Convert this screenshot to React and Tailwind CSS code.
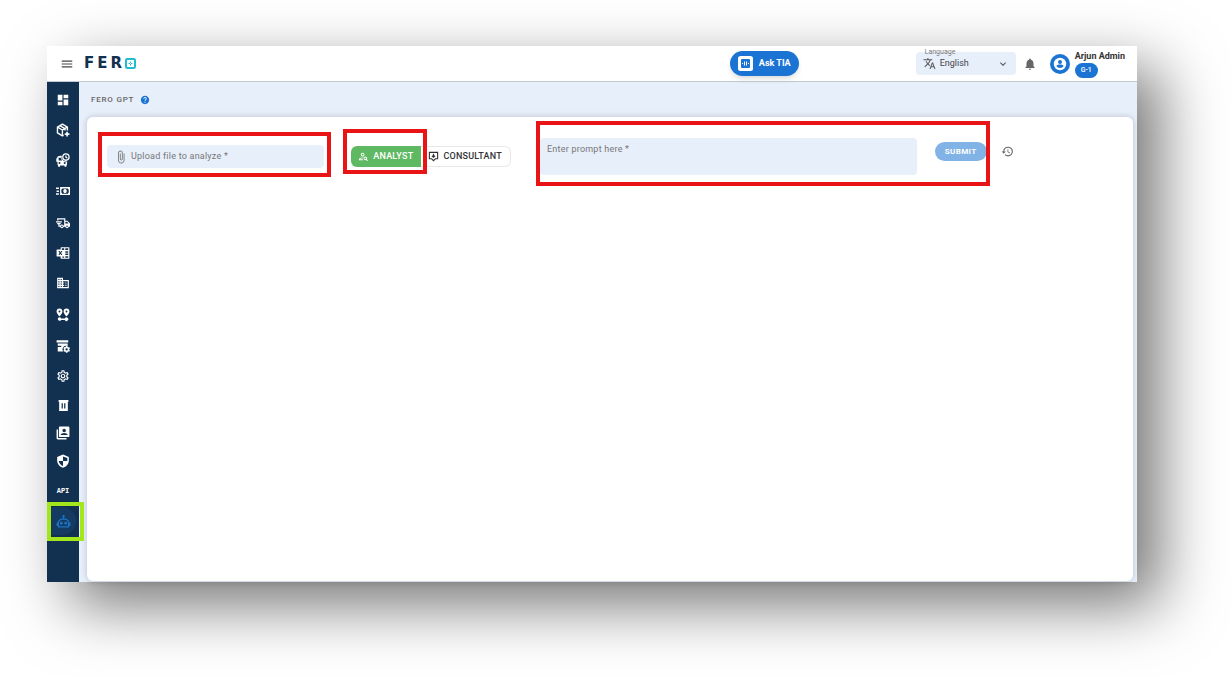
import React from "react";
import {
  MdAttachFile,
  MdDashboard,
  MdDomain,
  MdExpandMore,
  MdHelp,
  MdHistory,
  MdMenu,
  MdNotifications,
  MdOutlinePersonSearch,
  MdOutlineSettings,
  MdTranslate,
} from "react-icons/md";

function Svg({ children, className = "size-[14px]" }) {
  return (
    <svg viewBox="0 0 24 24" fill="currentColor" className={className} aria-hidden="true">
      {children}
    </svg>
  );
}

const PackageAdd = () => (
  <Svg>
    <g fill="none" stroke="currentColor" strokeWidth="2.4" strokeLinejoin="round">
      <path d="M13 21 11 22 2.5 17V7L11 2l8.500 5v6" />
      <path d="M2.500 7 11 12l8.500-5M11 12v10M6.500 4.500l9 5.300v3" />
      <path d="M19 15v8M15 19h8" strokeWidth="2.800" />
    </g>
  </Svg>
);

const BusClock = () => (
  <Svg>
    <path
      fillRule="evenodd"
      d="M3 6C4 4.700 7 4.500 10 4.500A7.500 7.500 0 0 0 17 14.500h2V19c0 1-.4 1.600-1 2v1.500c0 .6-.4 1-1 1h-1.500c-.6 0-1-.4-1-1V21.500H7v1c0 .6-.4 1-1 1H4.500c-.6 0-1-.4-1-1V21c-.6-.4-1-1-1-2v-4H.500V9H2V8c0-.8.300-1.500 1-2Zm1.500 2v5h6A9 9 0 0 1 8.700 8H4.500ZM6 15.500a1.700 1.700 0 1 0 0 3.400 1.700 1.700 0 0 0 0-3.400Zm9 0a1.700 1.700 0 1 0 0 3.400 1.700 1.700 0 0 0 0-3.400Z"
    />
    <path fillRule="evenodd" d="M17 .500a6.500 6.500 0 1 1 0 13 6.500 6.500 0 0 1 0-13Zm0 2.200a4.300 4.300 0 1 0 0 8.600 4.300 4.300 0 0 0 0-8.600Zm-1 1.500h2v2.700l2 1.200-1 1.600-3-1.900V4.200Z" />
  </Svg>
);

const CashFast = () => (
  <Svg>
    <path d="M0 6h5v2.500H0zM1 11h4v2.500H1zM0 16h5v2.500H0z" />
    <path fillRule="evenodd" d="M7 5h17v14H7V5Zm3.500 2.500c0 1-.5 1.700-1.300 2v5c.8.300 1.300 1 1.300 2h10c0-1 .5-1.700 1.300-2v-5c-.8-.3-1.300-1-1.300-2h-10Zm5 1c1.700 0 3 1.500 3 3.500s-1.300 3.500-3 3.500-3-1.500-3-3.500 1.300-3.500 3-3.500Z" />
  </Svg>
);

const TruckFast = () => (
  <Svg>
    <path
      fillRule="evenodd"
      d="M2 4h14v4h3.500L24 13v5.500h-2a3.200 3.200 0 0 1-6.200 0h-2.600a3.200 3.200 0 0 1-6.200 0H4V14h2v2.300h1.300a3.200 3.200 0 0 1 5.600 0H14V6.200H4V7.500H2V4ZM0 9h10v2H0V9Zm2 3h6v2H2v-2Zm14-2v3h5.500L19.200 10H16ZM10.100 16.300a1.400 1.400 0 1 0 0 2.800 1.400 1.400 0 0 0 0-2.800Zm8.800 0a1.400 1.400 0 1 0 0 2.800 1.400 1.400 0 0 0 0-2.800Z"
    />
  </Svg>
);

const Spreadsheet = () => (
  <Svg>
    <path
      fillRule="evenodd"
      d="M9 2h13c.6 0 1 .4 1 1v18c0 .6-.4 1-1 1H9c-.6 0-1-.4-1-1v-3H2c-.6 0-1-.4-1-1V7c0-.6.400-1 1-1h6V3c0-.6.400-1 1-1Zm1 2v3h4V4h-4Zm6 0v3h5V4h-5Zm0 5v2.500h5V9h-5Zm0 4v2.500h5V13h-5Zm0 4.500V20h5v-2.500h-5Zm-5 .5v2h3v-2h-3ZM4 8.500 6.200 12 4 15.500h2.200l1.300-2.200 1.300 2.200H11L8.700 12 11 8.500H8.800l-1.300 2.100-1.300-2.100H4Z"
    />
  </Svg>
);

const RoutePins = () => (
  <Svg>
    <path
      fillRule="evenodd"
      d="M6 1a5 5 0 0 1 5 5C11 9.500 6 14.500 6 14.500S1 9.500 1 6a5 5 0 0 1 5-5Zm0 3.400a1.600 1.600 0 1 0 0 3.200 1.600 1.600 0 0 0 0-3.200ZM18 1a5 5 0 0 1 5 5c0 3.500-5 8.500-5 8.500S13 9.500 13 6a5 5 0 0 1 5-5Zm0 3.400a1.600 1.600 0 1 0 0 3.200 1.600 1.600 0 0 0 0-3.200Z"
    />
    <path d="M6 16a3 3 0 0 1 2.800 2h6.400a3 3 0 1 1 0 2.400H8.800A3 3 0 1 1 6 16Z" />
  </Svg>
);

const ArchiveCog = () => (
  <Svg>
    <path d="M1 2h20v4H1zM3 7.500h17V12a6.500 6.500 0 0 0-8 9.500H3v-8h6v-2H3v-4Z" />
    <path fillRule="evenodd" d="M17 12h2.500l.4 1.500 1.200.7 1.500-.4 1.200 2.100-1 1.200v1.300l1 1.200-1.200 2.100-1.500-.4-1.200.7-.4 1.500H17l-.4-1.500-1.200-.7-1.500.4-1.200-2.100 1-1.200v-1.300l-1-1.200 1.200-2.100 1.500.4 1.200-.7L17 12Zm1.200 3.800a2 2 0 1 0 0 4 2 2 0 0 0 0-4Z" />
  </Svg>
);

const TrashBin = () => (
  <Svg className="size-[13px]">
    <path fillRule="evenodd" d="M3 2h18v3.500h-1V22H4V5.500H3V2Zm5.500 6v9.500h2.300V8H8.500Zm4.700 0v9.500h2.300V8h-2.300Z" />
  </Svg>
);

const ContactBox = () => (
  <Svg>
    <path d="M1 6h2.500v14.500H18V23H3a2 2 0 0 1-2-2V6Z" />
    <path fillRule="evenodd" d="M7 1h14a2 2 0 0 1 2 2v14a2 2 0 0 1-2 2H7a2 2 0 0 1-2-2V3c0-1.100.900-2 2-2Zm7 3.500a3 3 0 1 0 0 6 3 3 0 0 0 0-6ZM8 15.500h12c0-2.400-3.500-3.600-6-3.600s-6 1.200-6 3.600Z" />
  </Svg>
);

const ShieldHalf = () => (
  <Svg>
    <path fillRule="evenodd" d="m12 1 10 4v6c0 6-4.200 10.500-10 12.500C6.200 21.500 2 17 2 11V5l10-4Zm0 3.200V12h7.300c.1-.4.100-.8.100-1.200V6.700L12 4.200ZM12 12H4.700c.7 4 3.500 7 7.300 8.700V12Z" />
  </Svg>
);

const RobotOutline = () => (
  <Svg className="size-[15px]">
    <path
      fillRule="evenodd"
      d="M12 1.500a2 2 0 0 1 1 3.700V7h1c4 0 7 3 7.200 6.500H23V19h-2v2.500H3V19H1v-5.500h1.800C3 10 6 7 10 7h1V5.200a2 2 0 0 1 1-3.700ZM10 9c-3 0-5.200 2.200-5.200 5v5.500h14.400V14c0-2.800-2.200-5-5.200-5h-4Zm-1.500 3.500a2.300 2.300 0 1 1 0 4.600 2.300 2.300 0 0 1 0-4.600Zm7 0a2.300 2.300 0 1 1 0 4.600 2.300 2.300 0 0 1 0-4.600Z"
    />
  </Svg>
);

const ApiWord = () => (
  <span aria-hidden="true" className="font-['Liberation_Mono',monospace] text-[7px] leading-none font-bold">
    API
  </span>
);

const Icon = (Component) => () => <Component className="size-[14px]" />;

const NAV = [
  { label: "Dashboard", icon: Icon(MdDashboard), height: "h-[30px]" },
  { label: "Orders", icon: PackageAdd, height: "h-[30px]" },
  { label: "Schedules", icon: BusClock, height: "h-[30px]" },
  { label: "Payments", icon: CashFast, height: "h-8" },
  { label: "Shipments", icon: TruckFast, height: "h-8" },
  { label: "Reports", icon: Spreadsheet, height: "h-7" },
  { label: "Company", icon: Icon(MdDomain), height: "h-8" },
  { label: "Routes", icon: RoutePins, height: "h-8" },
  { label: "Inventory", icon: ArchiveCog, height: "h-[30px]" },
  { label: "Settings", icon: Icon(MdOutlineSettings), height: "h-[30px]" },
  { label: "Bin", icon: TrashBin, height: "h-7" },
  { label: "Contacts", icon: ContactBox, height: "h-7" },
  { label: "Security", icon: ShieldHalf, height: "h-7" },
  { label: "API", icon: ApiWord, height: "h-8" },
  { label: "FERO GPT", icon: RobotOutline, height: "h-7", active: true },
];

function Highlight({ className }) {
  return <div aria-hidden="true" className={`pointer-events-none absolute z-10 border-4 ${className}`} />;
}

function Logo() {
  return (
    <a href="#home" aria-label="FERO" className="ml-[10px] flex items-center text-[#12304f]">
      <span className="font-['DejaVu_Sans',sans-serif] text-[15px] leading-none font-bold tracking-[3px]">FER</span>
      <svg viewBox="0 0 11 11" className="size-[11px]" fill="none" aria-hidden="true">
        <rect x="1" y="1" width="9" height="9" rx="1.200" stroke="#1fbdd2" strokeWidth="2" />
        <path d="M5.500 3.500v4M3.500 5.500h4" stroke="#1fbdd2" strokeWidth="1" />
        <rect x="5" y="5" width="1" height="1" fill="#fff" />
      </svg>
    </a>
  );
}

function Header() {
  return (
    <header className="flex h-9 items-center border-b border-[#c3c8d2] bg-white pr-3 pl-[13px]">
      <button type="button" aria-label="Open menu" className="text-[#444]">
        <MdMenu className="size-[14px]" />
      </button>
      <Logo />
      <button
        type="button"
        className="mr-[117px] ml-auto flex h-[25px] items-center gap-1.5 rounded-full bg-[#1b74d3] px-2 text-[9px] font-bold text-white shadow-md"
      >
        <svg viewBox="0 0 15 15" className="size-[15px]" aria-hidden="true">
          <rect width="15" height="15" rx="2.500" fill="#fff" />
          <rect x="3" y="3" width="9" height="9" rx="1" fill="#1b74d3" />
          <path d="M4.500 7v1M6.500 5.500v4M8.500 5.500v4M10.500 7v1" stroke="#fff" strokeWidth="1" />
        </svg>
        Ask TIA
      </button>
      <div className="relative flex h-[23px] w-[100px] items-center rounded-sm bg-[#e7effb] text-[#555]">
        <label htmlFor="language" className="absolute -top-1 left-[9px] text-[7px] leading-[8px] text-[#777]">
          Language
        </label>
        <MdTranslate className="pointer-events-none absolute left-[7px] size-[13px]" />
        <select
          id="language"
          defaultValue="English"
          className="h-full w-full appearance-none bg-transparent pl-6 text-[9px] text-[#444] outline-none"
        >
          <option>English</option>
        </select>
        <MdExpandMore className="pointer-events-none absolute right-[7px] size-3" />
      </div>
      <button type="button" aria-label="Notifications" className="ml-[7px] text-[#666]">
        <MdNotifications className="size-[14px]" />
      </button>
      <svg viewBox="0 0 20 20" className="ml-[13px] size-5" aria-hidden="true">
        <circle cx="10" cy="10" r="10" fill="#1b74d3" />
        <circle cx="10" cy="10" r="6.200" fill="#fff" />
        <circle cx="10" cy="8" r="2" fill="#1b74d3" />
        <path d="M6.300 12c.8-1 2.300-1.400 3.700-1.400s2.900.4 3.700 1.400a4.400 4.400 0 0 1-7.400 0Z" fill="#1b74d3" />
      </svg>
      <div className="ml-[5px] flex flex-col items-start gap-px">
        <span className="text-[9px] leading-[12px] font-bold whitespace-nowrap text-[#333]">Arjun Admin</span>
        <span className="rounded-full bg-[#1b74d3] px-1.5 text-[7px] leading-[15px] font-medium text-white">G-1</span>
      </div>
    </header>
  );
}

function Sidebar() {
  return (
    <nav aria-label="Main" className="flex w-8 shrink-0 flex-col bg-[#12304f] pt-[3px] text-white">
      {NAV.map(({ label, icon: Glyph, height, active }) => (
        <a
          key={label}
          href="#section"
          aria-label={label}
          aria-current={active ? "page" : undefined}
          className={`relative flex items-center justify-center ${height} ${active ? "text-[#1b74c8]" : ""}`}
        >
          {active && <span className="absolute inset-y-0 right-[3px] left-1 rounded-r-full bg-[#163b62]" />}
          <span className="relative flex">
            <Glyph />
          </span>
          {active && <Highlight className="-top-[5px] -right-[5px] -bottom-1.5 left-0 border-[#a2e61b]" />}
        </a>
      ))}
    </nav>
  );
}

function UploadField() {
  return (
    <div className="relative w-[21.6%]">
      <label
        htmlFor="upload"
        className="flex h-[23px] items-center gap-[3px] rounded-sm bg-[#e7effb] pl-[7px] text-[9px] tracking-wide whitespace-nowrap text-[#777]"
      >
        <MdAttachFile className="size-[14px]" />
        Upload file to analyze *
      </label>
      <input id="upload" type="file" className="sr-only" />
      <Highlight className="-top-[13px] -right-[7px] -bottom-[9px] -left-[9px] border-[#e81416]" />
    </div>
  );
}

function ModeToggle() {
  return (
    <div role="group" aria-label="Mode" className="ml-[27px] flex h-[21px] text-[9px] font-medium tracking-wide">
      <div className="relative flex">
        <button type="button" aria-pressed="true" className="flex items-center gap-1 rounded-l-md bg-[#5fb962] pr-2 pl-[7px] text-white">
          <MdOutlinePersonSearch className="size-[11px]" />
          ANALYST
        </button>
        <Highlight className="-top-[17px] -right-1.5 -bottom-[7px] -left-2 border-[#e81416]" />
      </div>
      <button type="button" aria-pressed="false" className="flex items-center gap-1 rounded-r-md border border-l-0 border-[#e8e8e8] pr-2 pl-[7px] text-[#333]">
        <svg viewBox="0 0 12 12" className="size-[11px]" fill="none" stroke="currentColor" aria-hidden="true">
          <path d="M1.500 1.500h9v7H8L6 10.500 4 8.500H1.500v-7Z" strokeWidth="1.200" />
          <path d="M6 3v4M4.300 5.200 6 6.800l1.700-1.600" strokeWidth="1.200" />
        </svg>
        CONSULTANT
      </button>
    </div>
  );
}

function PromptForm() {
  return (
    <form className="relative ml-[29px] flex w-[44.4%] items-start gap-[18px]" onSubmit={(e) => e.preventDefault()}>
      <textarea
        aria-label="Enter prompt here"
        placeholder="Enter prompt here *"
        className="block h-[37px] min-w-0 flex-1 resize-none rounded-sm bg-[#e7effb] px-[7px] py-[5px] text-[9px] leading-[12px] tracking-wide outline-none placeholder:text-[#777]"
      />
      <button type="submit" className="mt-1 h-[19px] w-[52px] rounded-full bg-[#82b3e6] text-[8px] font-bold tracking-wider text-white">
        SUBMIT
      </button>
      <Highlight className="-top-[17px] -right-[3px] -bottom-[11px] -left-1 border-[#e81416]" />
    </form>
  );
}

export default function App() {
  return (
    <div className="flex min-h-screen flex-col bg-white pt-[46px] pr-[95px] pb-[95px] pl-[47px] font-[Roboto,sans-serif]">
      <div className="flex flex-1 flex-col bg-[#e7effb] shadow-[23px_23px_58px_rgba(0,0,0,0.54)]">
        <Header />
        <div className="flex flex-1">
          <Sidebar />
          <main className="flex min-w-0 flex-1 flex-col pr-1 pb-px pl-2">
            <div className="flex h-[35px] items-center gap-1.5 pl-1 text-[#666]">
              <h1 className="text-[8px] font-medium tracking-widest">FERO GPT</h1>
              <button type="button" aria-label="Help" className="text-[#1b74d3]">
                <MdHelp className="size-2.5" />
              </button>
            </div>
            <section className="flex-1 rounded-md bg-white px-5 pt-[21px] shadow-[0_0_6px_rgba(0,0,0,0.2)]">
              <div className="flex items-center">
                <UploadField />
                <ModeToggle />
                <PromptForm />
                <button type="button" aria-label="History" className="mb-2.5 ml-[14px] text-[#666]">
                  <MdHistory className="size-[13px]" />
                </button>
              </div>
            </section>
          </main>
        </div>
      </div>
    </div>
  );
}
